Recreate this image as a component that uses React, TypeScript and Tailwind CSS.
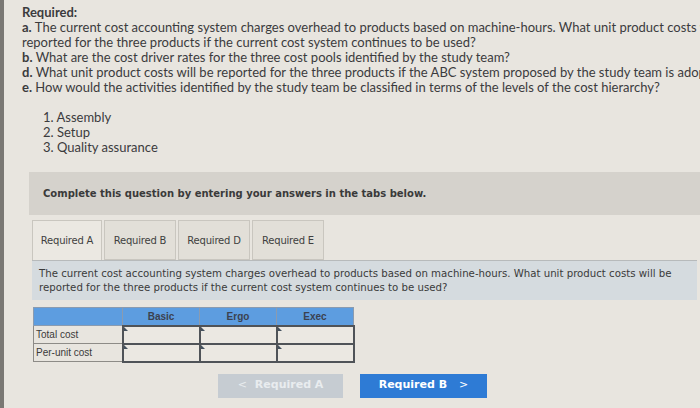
import React from 'react';

const questions: { tag: string; text: string }[] = [
  { tag: 'a.', text: 'The current cost accounting system charges overhead to products based on machine-hours. What unit product costs will be' },
  { tag: '', text: 'reported for the three products if the current cost system continues to be used?' },
  { tag: 'b.', text: 'What are the cost driver rates for the three cost pools identified by the study team?' },
  { tag: 'd.', text: 'What unit product costs will be reported for the three products if the ABC system proposed by the study team is adopted?' },
  { tag: 'e.', text: 'How would the activities identified by the study team be classified in terms of the levels of the cost hierarchy?' },
];

const activities = ['1. Assembly', '2. Setup', '3. Quality assurance'];
const tabs = ['Required A', 'Required B', 'Required D', 'Required E'];
const products = ['Basic', 'Ergo', 'Exec'];
const rows = ['Total cost', 'Per-unit cost'];

const InputCell = () => (
  <td className="relative h-[18px] border-2 border-[#4f5358] bg-[#ebe8e2] p-0">
    {/* little marker in the corner of every input */}
    <span className="absolute left-0 top-0 h-0 w-0 border-l-[4px] border-t-[4px] border-l-[#44515e] border-t-transparent" />
  </td>
);

export default function App() {
  return (
    <div className="flex h-[408px] w-[700px] overflow-hidden bg-[#e8e5df]">
      <div className="w-[4px] shrink-0 bg-[#7a7874]" />
      <div className="relative flex-1 overflow-hidden">
        {/* Question text */}
        <div className="whitespace-nowrap pl-[18px] pt-[5px] text-[13px] leading-[15px] text-[#3b3b3d] [font-family:Lato,'Open_Sans',sans-serif]">
          <div className="font-bold">Required:</div>
          {questions.map((q, i) => (
            <div key={i}>
              {q.tag && <span className="font-bold">{q.tag} </span>}
              {q.text}
            </div>
          ))}
          <div className="mt-[15px] pl-[21px]">
            {activities.map((a) => (
              <div key={a}>{a}</div>
            ))}
          </div>
        </div>

        <div className="ml-[25px] mt-[17px]">
          {/* Instruction band */}
          <div className="flex h-[43px] items-center bg-[#d5d2cc] pl-[14px] text-[10px] font-bold text-[#3a3a3a] [font-family:'DejaVu_Sans',sans-serif]">
            Complete this question by entering your answers in the tabs below.
          </div>

          {/* Tabs */}
          <div className="ml-[3px] mt-[5px] flex gap-[2px]">
            {tabs.map((t, i) => (
              <div
                key={t}
                className={
                  i === 0
                    ? 'flex h-[40px] w-[70px] items-center justify-center border border-b-0 border-[#c9c6bf] bg-[#ebe8e2] text-[10px] tracking-[-0.2px] text-[#3f3f3f] [font-family:"DejaVu_Sans",sans-serif]'
                    : 'flex h-[40px] w-[72px] items-center justify-center border border-[#c9c6bf] bg-[#e2dfd8] text-[10px] tracking-[-0.2px] text-[#3f3f3f] [font-family:"DejaVu_Sans",sans-serif]'
                }
              >
                {t}
              </div>
            ))}
          </div>

          {/* Question panel */}
          <div className="ml-[3px] mr-[3px] border-t border-[#b7babb] bg-[#d5dbdf] px-[7px] pb-[5px] pt-[6px] text-[10.2px] leading-[14px] text-[#3a3a3a] [font-family:'DejaVu_Sans',sans-serif]">
            The current cost accounting system charges overhead to products based on machine-hours. What unit product costs will be
            <br />
            reported for the three products if the current cost system continues to be used?
          </div>

          {/* Answer table */}
          <table className="ml-[4px] mt-[7px] border-collapse text-[10px] text-[#3a3a3a] [font-family:'Liberation_Sans',Arial,sans-serif]">
            <thead>
              <tr className="h-[18px] bg-[#5d9de0]">
                <th className="w-[89px] border border-[#8a9bb0] p-0" />
                {products.map((p) => (
                  <th key={p} className="w-[77px] border border-[#8a9bb0] p-0 text-center font-bold text-[#3b4250]">
                    {p}
                  </th>
                ))}
              </tr>
            </thead>
            <tbody>
              {rows.map((r) => (
                <tr key={r}>
                  <td className="h-[18px] border border-[#8d8b87] px-[2px] py-0 text-left">{r}</td>
                  {products.map((p) => (
                    <InputCell key={p} />
                  ))}
                </tr>
              ))}
            </tbody>
          </table>

          {/* Navigation */}
          <div className="ml-[189px] mt-[11px] flex gap-[17px] text-[11px] font-bold [font-family:'DejaVu_Sans',sans-serif]">
            <div className="flex h-[24px] w-[125px] items-center justify-center gap-[8px] bg-[#c6ccd2] text-[#e9ecef]">
              <span className="font-normal">&lt;</span>
              <span>Required A</span>
            </div>
            <div className="flex h-[24px] w-[127px] items-center justify-center gap-[12px] bg-[#2e7bd5] text-white">
              <span>Required B</span>
              <span className="font-normal">&gt;</span>
            </div>
          </div>
        </div>
      </div>
    </div>
  );
}
